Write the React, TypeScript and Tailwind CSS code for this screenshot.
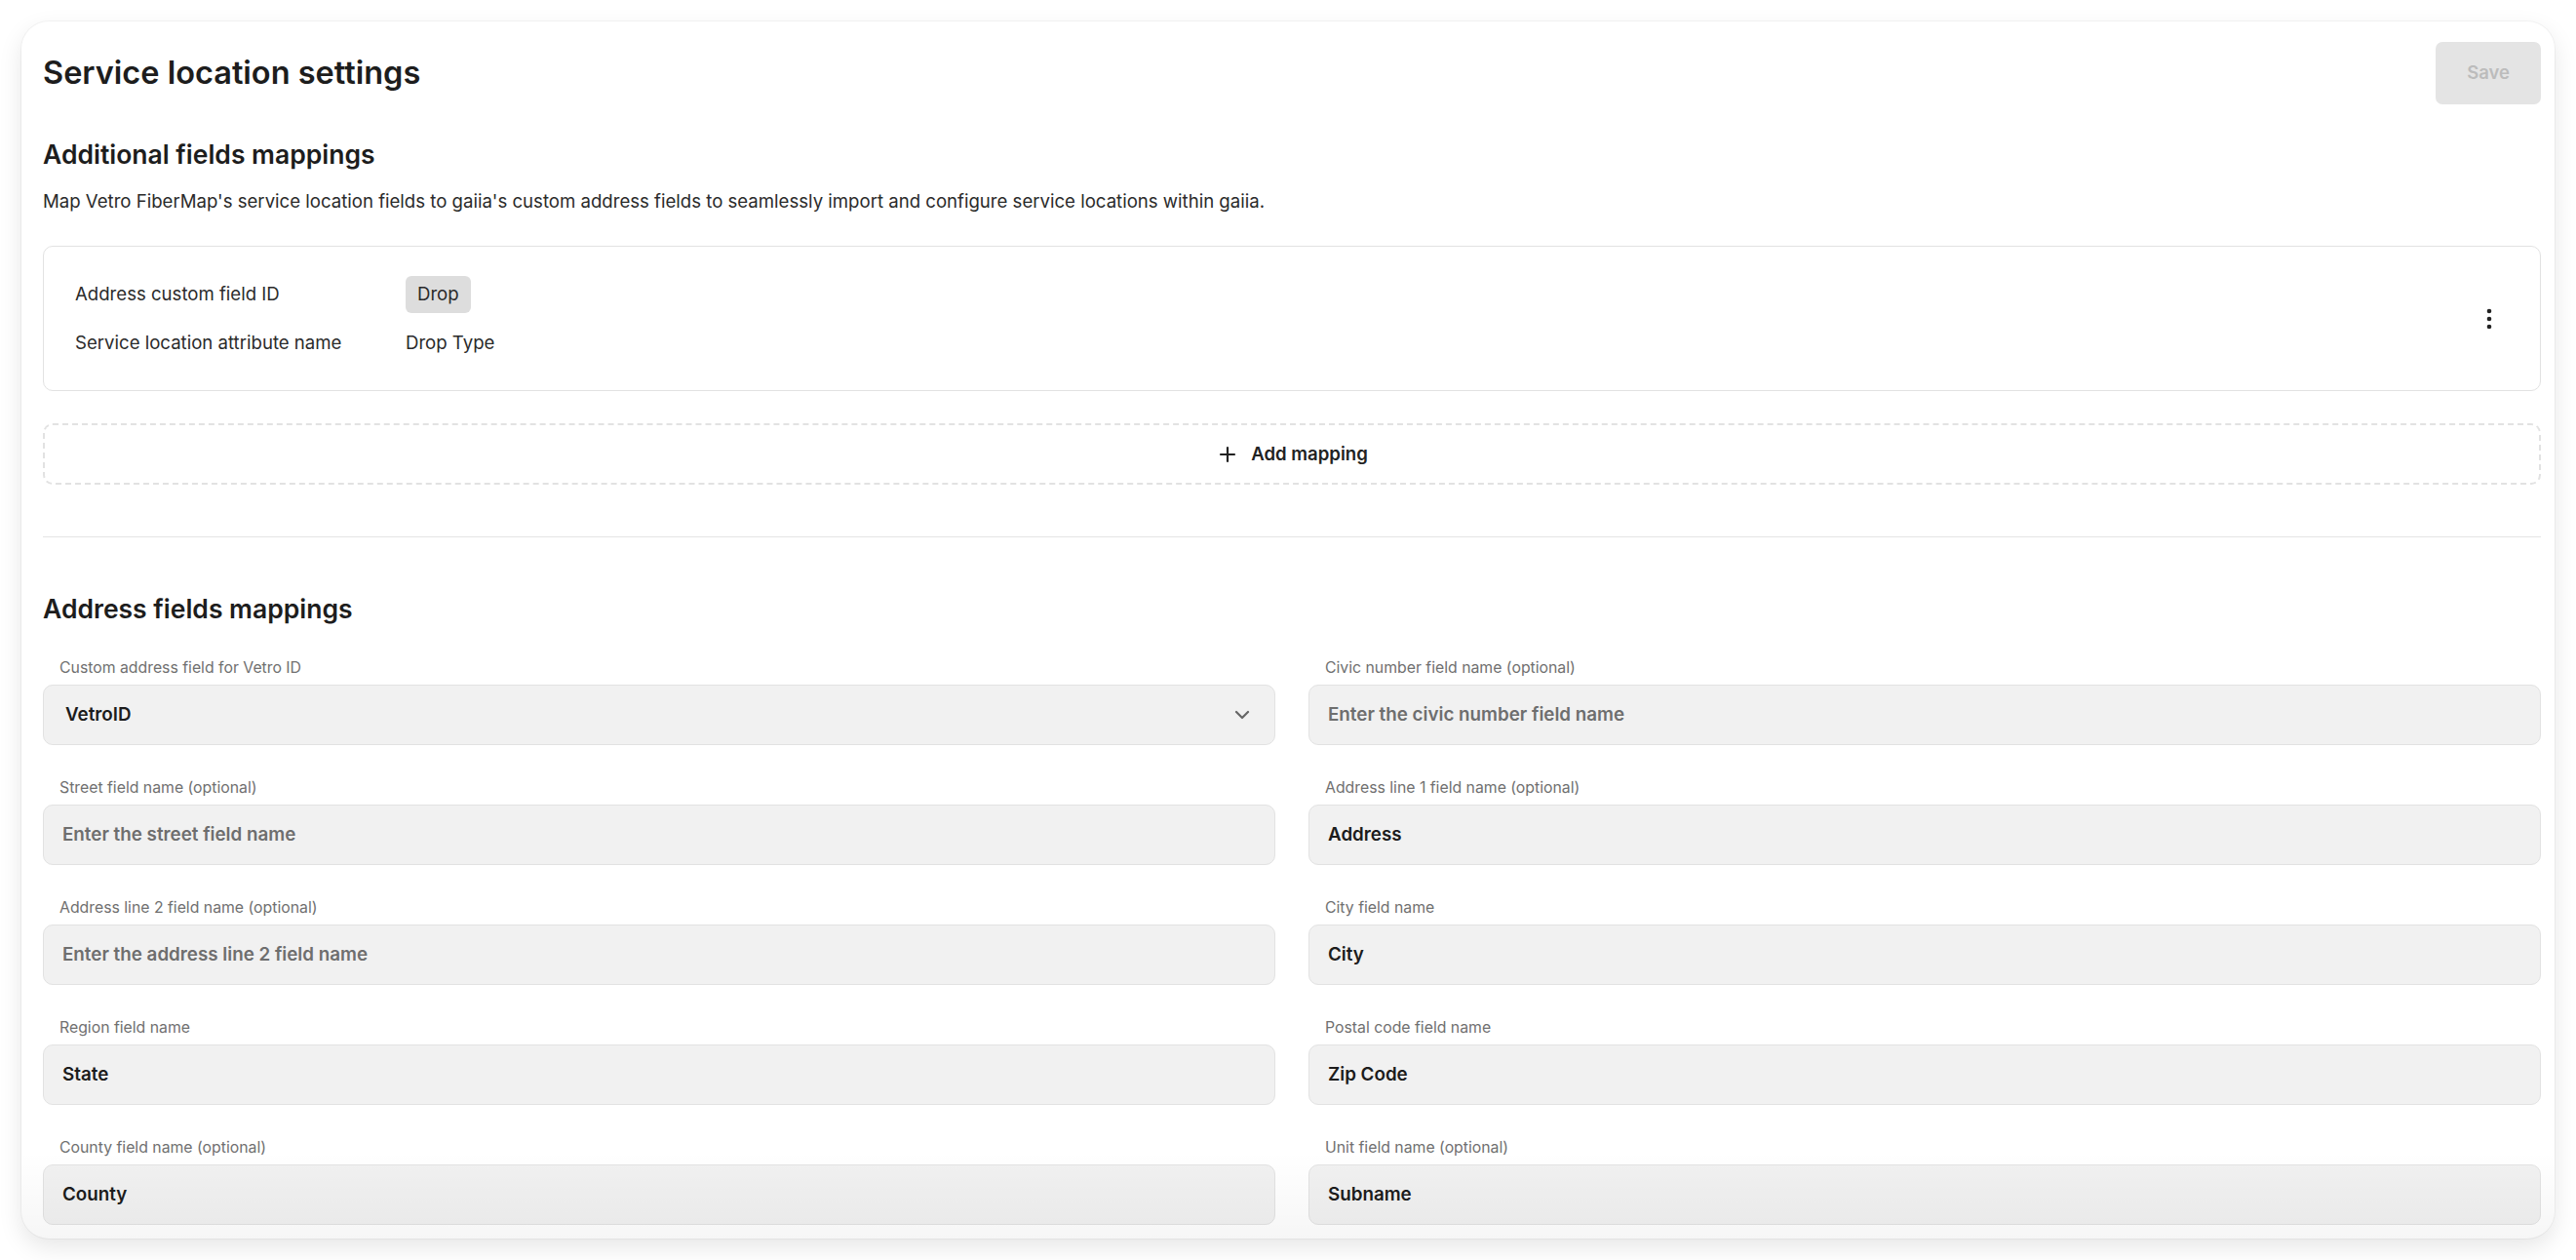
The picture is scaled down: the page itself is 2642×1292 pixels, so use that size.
import { ChevronDown, Plus } from 'lucide-react'

interface FieldDef {
  label: string
  value?: string
  placeholder?: string
  select?: boolean
}

const fields: FieldDef[] = [
  { label: 'Custom address field for Vetro ID', value: 'VetroID', select: true },
  { label: 'Civic number field name (optional)', placeholder: 'Enter the civic number field name' },
  { label: 'Street field name (optional)', placeholder: 'Enter the street field name' },
  { label: 'Address line 1 field name (optional)', value: 'Address' },
  { label: 'Address line 2 field name (optional)', placeholder: 'Enter the address line 2 field name' },
  { label: 'City field name', value: 'City' },
  { label: 'Region field name', value: 'State' },
  { label: 'Postal code field name', value: 'Zip Code' },
  { label: 'County field name (optional)', value: 'County' },
  { label: 'Unit field name (optional)', value: 'Subname' },
]

function KebabIcon() {
  return (
    <svg width="24" height="24" viewBox="0 0 24 24" fill="#222222">
      <circle cx="12" cy="4" r="2.3" />
      <circle cx="12" cy="12" r="2.3" />
      <circle cx="12" cy="20" r="2.3" />
    </svg>
  )
}

function Field({ field }: { field: FieldDef }) {
  return (
    <div className="flex flex-col">
      <label className="pl-[17px] text-[15.8px] leading-[20px] text-[#707070]">{field.label}</label>
      <div
        className={
          field.select
            ? 'mt-[7px] flex h-[62px] items-center justify-between rounded-[10px] border border-[#e2e2e2] bg-[#f1f1f1] pl-[22px] pr-[21px]'
            : 'mt-[7px] flex h-[62px] items-center rounded-[10px] border border-[#e2e2e2] bg-[#f1f1f1] pl-[19px] pr-[20px]'
        }
      >
        {field.value ? (
          <span className="text-[18.8px] font-semibold text-[#1c1c1c]">{field.value}</span>
        ) : (
          <span className="text-[18.8px] font-semibold text-[#6e6e6e]">{field.placeholder}</span>
        )}
        {field.select && <ChevronDown className="h-[24px] w-[24px] text-[#666666]" strokeWidth={2.2} />}
      </div>
    </div>
  )
}

export default function App() {
  return (
    <div className="h-screen bg-white p-[22px] font-['Inter',sans-serif]">
      <div className="relative h-full overflow-hidden rounded-[28px] bg-white pl-[22px] pr-[14px] pt-[21px] shadow-[0_0_0_1px_rgba(0,0,0,0.035),0_9px_24px_rgba(0,0,0,0.1)]">
        <div className="flex h-[64px] items-center justify-between">
          <h1 className="text-[32.5px] font-semibold leading-[40px] text-[#1d1d1d]">Service location settings</h1>
          <button
            type="button"
            disabled
            className="h-[64px] rounded-[7px] bg-[#e4e4e4] px-[32px] text-[18.5px] font-semibold text-[#bcbcbc]"
          >
            Save
          </button>
        </div>

        <h2 className="mt-[35px] text-[26.5px] font-semibold leading-[32px] text-[#1d1d1d]">Additional fields mappings</h2>
        <p className="mt-[18px] text-[18.6px] leading-[28px] text-[#2b2b2b]">
          Map Vetro FiberMap's service location fields to gaiia's custom address fields to seamlessly import and configure service locations within gaiia.
        </p>

        <div className="mt-[32px] flex items-center justify-between rounded-[10px] border border-[#e2e2e2] pb-[29px] pl-[32px] pr-[32px] pt-[30px]">
          <div className="flex flex-col gap-[12px]">
            <div className="flex h-[38px] items-center">
              <span className="w-[339px] text-[18.6px] text-[#2b2b2b]">Address custom field ID</span>
              <span className="flex h-[38px] items-center rounded-[6px] bg-[#dddddd] px-[12px] text-[18.6px] text-[#2a2a2a]">Drop</span>
            </div>
            <div className="flex h-[38px] items-center">
              <span className="w-[339px] text-[18.6px] text-[#2b2b2b]">Service location attribute name</span>
              <span className="text-[18.6px] text-[#2a2a2a]">Drop Type</span>
            </div>
          </div>
          <button type="button" className="flex h-[40px] w-[40px] items-center justify-center">
            <KebabIcon />
          </button>
        </div>

        <button
          type="button"
          className="mt-[33px] flex h-[63px] w-full items-center justify-center gap-[12px] rounded-[10px] border-2 border-dashed border-[#e2e2e2] text-[18.6px] font-semibold text-[#222222]"
        >
          <Plus className="h-[24px] w-[24px]" strokeWidth={2.2} />
          Add mapping
        </button>

        <div className="mt-[53px] h-px bg-[#e5e5e5]" />

        <h2 className="mt-[57px] text-[26.5px] font-semibold leading-[32px] text-[#1d1d1d]">Address fields mappings</h2>

        <div className="mt-[35px] grid grid-cols-2 gap-x-[34px] gap-y-[34px]">
          {fields.map(f => (
            <Field key={f.label} field={f} />
          ))}
        </div>

        <div className="pointer-events-none absolute bottom-0 left-0 right-0 h-[90px] bg-gradient-to-b from-transparent to-black/[0.035]" />
      </div>
    </div>
  )
}
